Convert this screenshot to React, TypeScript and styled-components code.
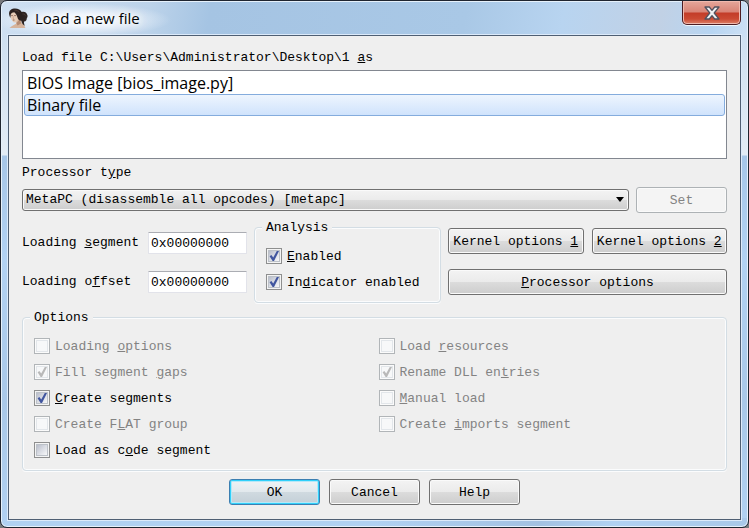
import React, { useState } from 'react';
import styled, { createGlobalStyle, css } from 'styled-components';

const Global = createGlobalStyle`
  * { box-sizing: border-box; }
  body {
    margin: 0;
    background: #77797c;
    color: #000;
    font: 13px/18px "Liberation Mono", monospace;
  }
  button, input, select { font: inherit; color: inherit; }
`;

const Frame = styled.div`
  display: flex;
  flex-direction: column;
  min-height: 100vh;
  padding: 0 7px 7px;
  border: 1px solid #1f2530;
  border-radius: 7px;
  box-shadow: inset 0 0 0 1px #e6f1fb;
  background:
    linear-gradient(90deg, transparent 0 50%, #a3c1e2 72%, #b1d1f2 82%, #a9c8e8 100%) bottom / 100% 9px no-repeat,
    radial-gradient(closest-side, #f0f6fc 30%, transparent) -10px 2px / 180px 34px no-repeat,
    linear-gradient(100deg, #cfe0f2 0, #bcd3ea 20%, #a5c4e3 28%, #a9c8e6 62%, #b8d4f0 75%, #c1d1e5 88%, #b7d5f2 95%, #cde0f4 100%) top / 100% 36px no-repeat,
    linear-gradient(#c8dcf0 0, #e3ecf5 154px, #a6c6e8 155px, #b2d2f3 260px, #a9c8e8 400px, #b1d1f2 100%);
`;

const TitleBar = styled.header`
  display: flex;
  align-items: center;
  height: 34px;
  gap: 7px;
`;

const TitleText = styled.h1`
  margin: 0;
  font: 15px/22px "Open Sans", sans-serif;
  text-shadow: 0 0 6px #fff, 0 0 10px #fff, 0 0 14px #fff, 0 0 18px #fff;
`;

const CloseButton = styled.button`
  display: flex;
  align-items: center;
  justify-content: center;
  align-self: flex-start;
  width: 59px;
  height: 24px;
  margin-left: auto;
  padding: 0;
  border: 1px solid #4d1c22;
  border-top: 0;
  border-radius: 0 0 5px 5px;
  background: linear-gradient(#e5a79b 0, #d98476 11px, #c33c28 12px, #cb4a33 18px, #dc8169 100%);
  box-shadow: inset 0 0 0 1px #f0b9ae, 0 1px 0 #f2f7fc;
`;

const Client = styled.main`
  display: flex;
  flex: 1;
  flex-direction: column;
  gap: 5px;
  padding: 13px;
  border: 1px solid #4f5f73;
  box-shadow: 0 0 0 1px #dceafa;
  background: #efefef;
`;

const Stack = styled.section`
  display: flex;
  flex-direction: column;
  gap: 3px;
`;

const Caption = styled.label`
  display: block;
  white-space: pre;
`;

const FileList = styled.ul`
  height: 89px;
  margin: 0;
  padding: 1px;
  border: 1px solid #828790;
  background: #fff;
  list-style: none;
  font: 16px/20px "Open Sans", sans-serif;
`;

const FileItem = styled.li<{ $selected: boolean }>`
  height: 22px;
  padding: 0 2px;
  border: 1px solid transparent;
  border-radius: 3px;
  ${(p) => p.$selected && css`
    border-color: #84acdd;
    background: linear-gradient(#eef5fe, #d0e3fc);
  `}
`;

const ProcessorRow = styled.div`
  display: flex;
  align-items: center;
  gap: 7px;
`;

const SelectWrap = styled.div`
  position: relative;
  flex: 1;
  svg {
    position: absolute;
    top: 8px;
    right: 5px;
    pointer-events: none;
  }
`;

const raised = css`
  border: 1px solid #707070;
  border-radius: 3px;
  background: linear-gradient(#f3f3f3 0, #ebebeb 48%, #dcdcdc 50%, #cdcdcd 100%);
  box-shadow: inset 0 0 0 1px #fafafa;
`;

const Select = styled.select`
  ${raised}
  display: block;
  width: 100%;
  height: 22px;
  padding: 0 20px 0 3px;
  appearance: none;
`;

const Button = styled.button<{ $primary?: boolean; $fixed?: boolean }>`
  ${raised}
  height: 26px;
  padding: 2px 0 0;
  white-space: pre;
  ${(p) => p.$fixed && css`width: 91px;`}
  ${(p) => p.$primary && css`
    border-color: #3c7fb1;
    background: linear-gradient(#eff3f5 0, #e2e9ed 48%, #d0dae0 50%, #c3cfd7 100%);
    box-shadow: inset 0 0 0 1px #30d0fa, inset 0 0 0 2px #b5e8f8;
  `}
  &:disabled {
    border-color: #adb2b5;
    background: #f4f4f4;
    color: #838383;
  }
`;

const Settings = styled.div`
  display: grid;
  grid-template-columns: 225px 187px 1fr;
  gap: 7px;
`;

const Fields = styled.div`
  display: grid;
  grid-template-columns: 126px 1fr;
  align-content: start;
  align-items: center;
  row-gap: 17px;
  padding-top: 14px;
`;

const TextBox = styled.input`
  width: 100%;
  height: 22px;
  padding: 0 2px;
  border: 1px solid #e2e3ea;
  border-top-color: #abadb3;
  border-radius: 1px;
  background: #fff;
`;

const ButtonGrid = styled.div`
  display: grid;
  grid-template-columns: 1fr 1fr;
  align-content: start;
  gap: 15px 8px;
  padding-top: 10px;
  ${Button}:last-child { grid-column: 1 / -1; }
`;

const Group = styled.fieldset`
  min-width: 0;
  margin: 0;
  padding: 7px 11px;
  border: 1px solid #d3dde4;
  border-radius: 4px;
  box-shadow: inset 0 0 0 1px #fbfcfd, 0 1px 0 #fbfcfd;
`;

const Legend = styled.legend`
  height: 18px;
  margin-left: -4px;
  padding: 0 4px;
  background: #efefef;
  line-height: 20px;
`;

const Columns = styled.div`
  display: grid;
  grid-template-columns: 1fr 1fr;
  column-gap: 8px;
`;

const CheckLabel = styled.label<{ $off: boolean }>`
  display: flex;
  align-items: center;
  gap: 5px;
  height: 26px;
  color: ${(p) => (p.$off ? '#838383' : '#000')};
  line-height: 20px;
  white-space: pre;
  > span:last-child { padding-top: 2px; }
`;

const CheckFrame = styled.span`
  position: relative;
  width: 16px;
  height: 16px;
  svg {
    position: absolute;
    inset: 0;
    pointer-events: none;
  }
`;

const CheckInput = styled.input`
  display: block;
  width: 16px;
  height: 16px;
  margin: 0;
  border: 1px solid #8e8f8f;
  appearance: none;
  background: linear-gradient(135deg, #b5bac8 2px, #d6d9e1 9px, #f3f4f6 16px);
  box-shadow: inset 0 0 0 1px #f4f4f4, inset 0 0 0 2px #bcc1c8;
  &:disabled {
    border-color: #b1b5b8;
    background: #f7f8f9;
    box-shadow: inset 0 0 0 1px #fbfbfb, inset 0 0 0 2px #e2e6ea;
  }
`;

const Footer = styled.footer`
  display: flex;
  justify-content: center;
  gap: 9px;
  padding-top: 3px;
`;

/* Renders a caption whose access key is marked by a preceding "&". */
function Mnemonic({ text }: { text: string }) {
  const at = text.indexOf('&');
  if (at < 0) return <span>{text}</span>;
  return (
    <span>
      {text.slice(0, at)}
      <u>{text[at + 1]}</u>
      {text.slice(at + 2)}
    </span>
  );
}

function Check({ text, checked = false, disabled = false }: { text: string; checked?: boolean; disabled?: boolean }) {
  const [on, setOn] = useState(checked);
  return (
    <CheckLabel $off={disabled}>
      <CheckFrame>
        <CheckInput type="checkbox" checked={on} disabled={disabled} onChange={() => setOn(!on)} />
        {on && (
          <svg width="16" height="16" viewBox="0 0 16 16" fill={disabled ? '#b9b9b9' : '#41569f'}>
            <path d="M3.600 8.200 5.400 7l1.800 2.500L10.800 3h2.200L8 13H6.600z" />
          </svg>
        )}
      </CheckFrame>
      <Mnemonic text={text} />
    </CheckLabel>
  );
}

function PortraitIcon() {
  return (
    <svg width="20" height="20" viewBox="0 0 20 20" aria-hidden="true">
      <path d="M1.500 20 4 18l4-2.200.5-5 4.500 0 .5 4 2.500 2.200L17.500 20z" fill="#d6b49c" />
      <path d="M8.500 15 12 11l1 4.500-3.500 2z" fill="#b38a72" />
      <path d="M2.200 5.200 5.500 3 10 5.500l.2 6-2.700 3-2.200-.2L3 11z" fill="#e6cbb6" />
      <path d="M1.400 7.500C.3 4 2.200 1 6 .6c3.700-.4 6.500 1.200 7.700 3.400 2.300-1 5 .2 5.400 2.600.9 1.400.4 3-.3 3.700.1 2.200-1.300 3.400-2.800 3.100-.2 1.800.3 3.200 1.100 4.300-2-.7-3.400-2.400-3.800-4.900C11 12.500 9.900 11.500 9.500 9.500 8.900 7.500 8.200 5.800 6.300 4.300 4.600 4.300 3.300 5 2.800 6.300L2.300 10z" fill="#2b211f" />
      <path d="M6.500 2.300c2-.3 3.700.5 4.700 2M14.500 6c1.400-.2 2.500.4 2.900 1.600" fill="none" stroke="#54413a" strokeWidth=".7" />
      <path d="M3.200 7.600h1.600M6.200 7.600h1.700M4.800 12h1.700" stroke="#7a5040" strokeWidth=".8" />
      <path d="M5.400 8.200 5 10.400h1" fill="none" stroke="#bd927a" strokeWidth=".6" />
    </svg>
  );
}

function CloseIcon() {
  return (
    <svg width="16" height="14" viewBox="0 0 16 14" aria-hidden="true">
      <path d="M1 1h4.300L8 4.300 10.700 1H15l-4.800 6 4.800 6h-4.300L8 9.700 5.300 13H1l4.800-6z" fill="#f1f1f3" stroke="#51515e" strokeWidth="1.300" strokeLinejoin="round" />
    </svg>
  );
}

const FILES = ['BIOS Image [bios_image.py]', 'Binary file'];

export default function App() {
  const [file, setFile] = useState(1);
  return (
    <>
      <Global />
      <Frame>
        <TitleBar>
          <PortraitIcon />
          <TitleText>Load a new file</TitleText>
          <CloseButton type="button" aria-label="Close"><CloseIcon /></CloseButton>
        </TitleBar>
        <Client>
          <Stack>
            <Caption as="div" id="files-label"><Mnemonic text={'Load file C:\\Users\\Administrator\\Desktop\\1 &as'} /></Caption>
            <FileList role="listbox" aria-labelledby="files-label" tabIndex={0}>
              {FILES.map((name, i) => (
                <FileItem key={name} role="option" aria-selected={i === file} $selected={i === file} onClick={() => setFile(i)}>
                  {name}
                </FileItem>
              ))}
            </FileList>
          </Stack>
          <Caption htmlFor="processor"><Mnemonic text="Processor t&ype" /></Caption>
          <ProcessorRow>
            <SelectWrap>
              <Select id="processor">
                <option>MetaPC (disassemble all opcodes) [metapc]</option>
              </Select>
              <svg width="8" height="5" viewBox="0 0 8 5" aria-hidden="true"><path d="M0 0h8L4 5z" /></svg>
            </SelectWrap>
            <Button type="button" $fixed disabled>Set</Button>
          </ProcessorRow>
          <Settings>
            <Fields>
              <Caption htmlFor="segment"><Mnemonic text="Loading &segment" /></Caption>
              <TextBox id="segment" defaultValue="0x00000000" />
              <Caption htmlFor="offset"><Mnemonic text="Loading o&ffset" /></Caption>
              <TextBox id="offset" defaultValue="0x00000000" />
            </Fields>
            <Group>
              <Legend>Analysis</Legend>
              <Check text="&Enabled" checked />
              <Check text="In&dicator enabled" checked />
            </Group>
            <ButtonGrid>
              <Button type="button"><Mnemonic text="Kernel options &1" /></Button>
              <Button type="button"><Mnemonic text="Kernel options &2" /></Button>
              <Button type="button"><Mnemonic text="&Processor options" /></Button>
            </ButtonGrid>
          </Settings>
          <Group>
            <Legend>Options</Legend>
            <Columns>
              <div>
                <Check text="Loading &options" disabled />
                <Check text="Fill segment &gaps" checked disabled />
                <Check text="&Create segments" checked />
                <Check text="Create F&LAT group" disabled />
                <Check text="Load as c&ode segment" />
              </div>
              <div>
                <Check text="Load &resources" disabled />
                <Check text="Rename DLL en&tries" checked disabled />
                <Check text="&Manual load" disabled />
                <Check text="Create &imports segment" disabled />
              </div>
            </Columns>
          </Group>
          <Footer>
            <Button type="button" $fixed $primary>OK</Button>
            <Button type="button" $fixed>Cancel</Button>
            <Button type="button" $fixed>Help</Button>
          </Footer>
        </Client>
      </Frame>
    </>
  );
}
